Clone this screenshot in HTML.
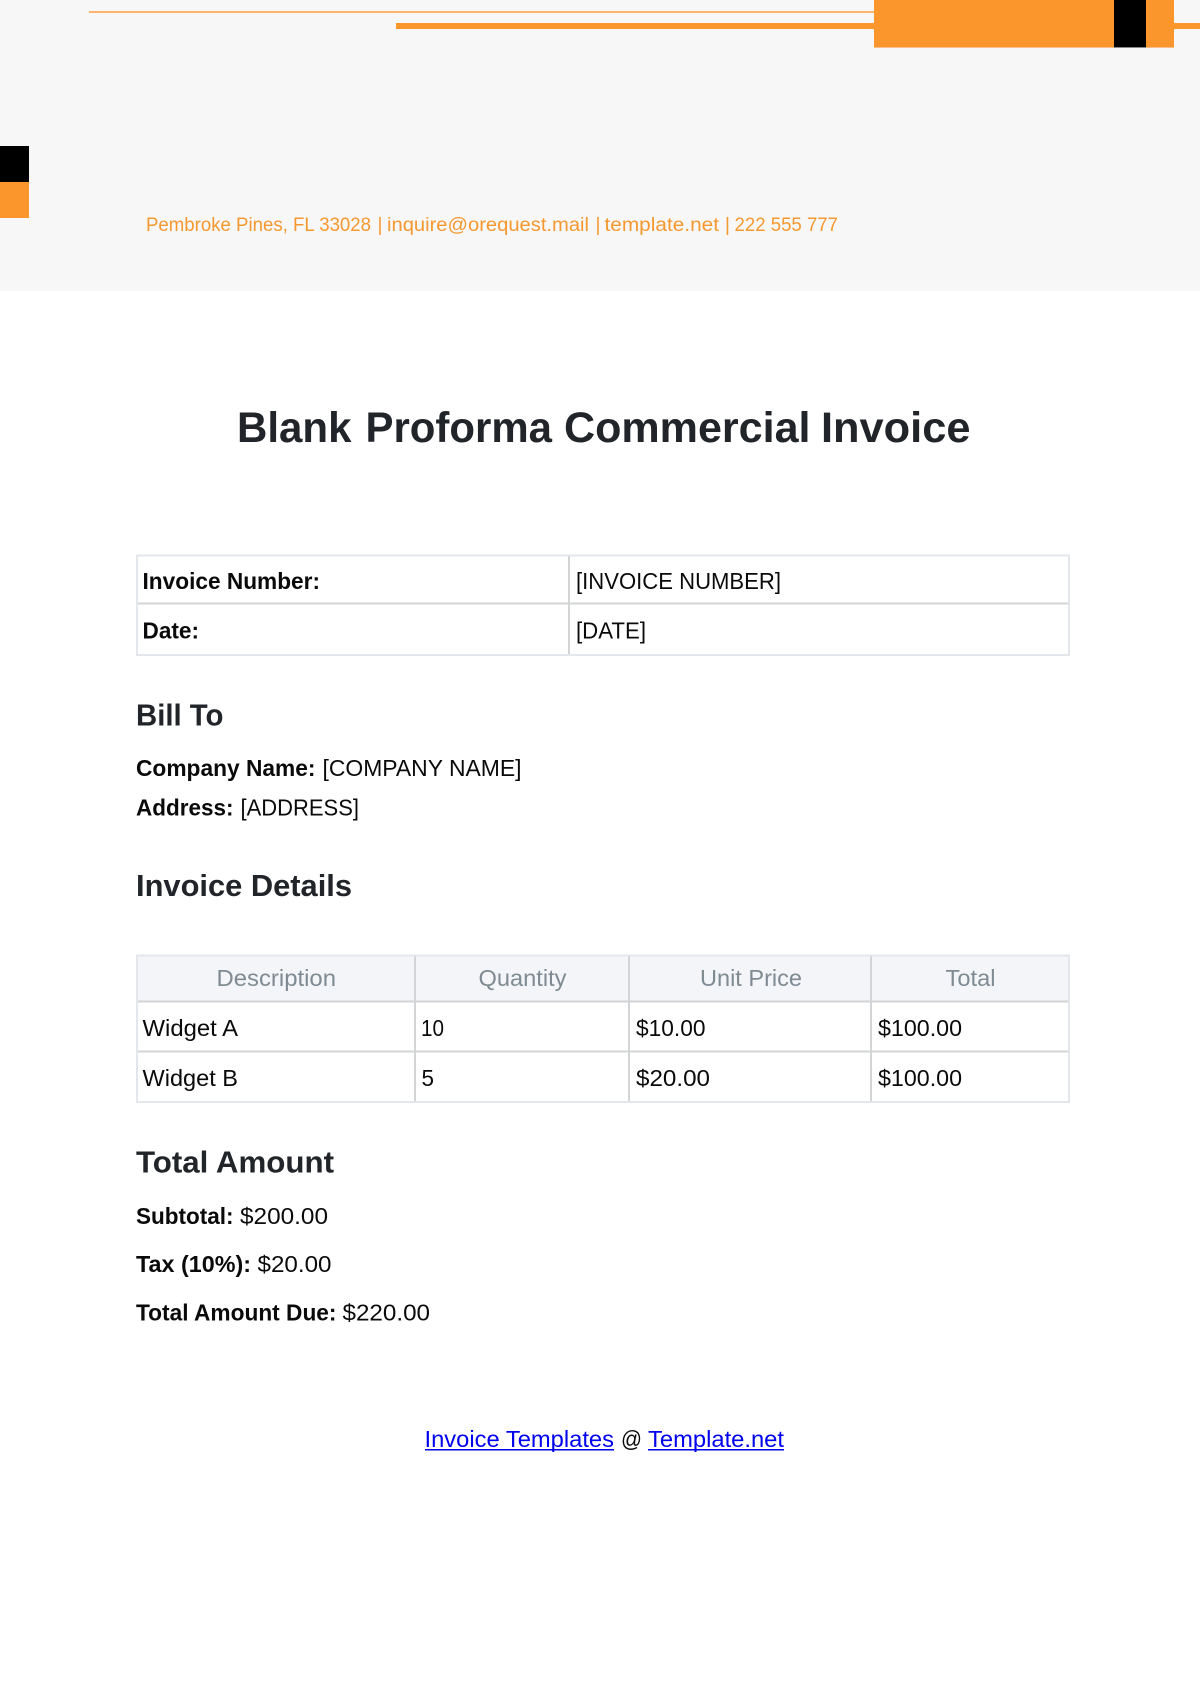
<!DOCTYPE html>
<html lang="en">
<head>
<meta charset="utf-8">
<title>Blank Proforma Commercial Invoice</title>
<style>
html,body{margin:0;padding:0;background:#fff}
svg{display:block}
text{font-family:"Liberation Sans",Arial,sans-serif;font-size:23px;fill:#0a0a0a}
.b{font-weight:700}
.h{font-weight:700;font-size:31px;fill:#212429}
.th{fill:#7f8a92}
.l{fill:#0000ee}
.c{font-size:19px;fill:#f5982f}
.t{font-size:43px}
</style>
</head>
<body>
<svg xmlns="http://www.w3.org/2000/svg" width="1200" height="1696" viewBox="0 0 1200 1696">
<rect width="1200" height="1696" fill="#fff"/>
<rect width="1200" height="291" fill="#f7f7f7"/>
<!-- header decoration -->
<rect x="89" y="11" width="785" height="2" fill="#fdb56d"/>
<rect x="396" y="23" width="478" height="6" fill="#fb962d"/>
<rect x="1174" y="23" width="26" height="6" fill="#fb962d"/>
<rect x="874" y="0" width="300" height="47" fill="#fb962d"/>
<rect x="874" y="47" width="300" height="1" fill="#fbc08a"/>
<rect x="1114" y="0" width="32" height="47" fill="#000"/>
<rect x="1114" y="47" width="32" height="1" fill="#8a8a8a"/>
<rect x="0" y="146" width="29" height="36" fill="#000"/>
<rect x="0" y="182" width="29" height="36" fill="#fb962d"/>
<text class="c" x="146" y="231" textLength="225" lengthAdjust="spacingAndGlyphs">Pembroke Pines, FL 33028</text>
<text class="c" x="377.5" y="231">|</text>
<text class="c" x="387" y="231" textLength="202" lengthAdjust="spacingAndGlyphs">inquire@orequest.mail</text>
<text class="c" x="595.5" y="231">|</text>
<text class="c" x="604.5" y="231" textLength="114.5" lengthAdjust="spacingAndGlyphs">template.net</text>
<text class="c" x="725" y="231">|</text>
<text class="c" x="734.5" y="231" textLength="103.5" lengthAdjust="spacingAndGlyphs">222 555 777</text>

<!-- title -->
<text class="h t" x="237" y="442" textLength="114.5" lengthAdjust="spacingAndGlyphs">Blank</text>
<text class="h t" x="365.5" y="442" textLength="186.5" lengthAdjust="spacingAndGlyphs">Proforma</text>
<text class="h t" x="564" y="442" textLength="246.5" lengthAdjust="spacingAndGlyphs">Commercial</text>
<text class="h t" x="821" y="442" textLength="149.5" lengthAdjust="spacingAndGlyphs">Invoice</text>

<!-- table 1 -->
<g fill="#d2d4d6">
<rect x="568" y="555" width="2" height="100"/>
<rect x="137" y="602.5" width="932" height="2"/>
</g>
<rect x="137" y="555.5" width="932" height="99.5" fill="none" stroke="#e3e6ea" stroke-width="2"/>
<text class="b" x="142.5" y="589" textLength="177.5" lengthAdjust="spacingAndGlyphs">Invoice Number:</text>
<text x="576" y="589" textLength="205" lengthAdjust="spacingAndGlyphs">[INVOICE NUMBER]</text>
<text class="b" x="142.5" y="638.5" textLength="56.5" lengthAdjust="spacingAndGlyphs">Date:</text>
<text x="576" y="638.5" textLength="70" lengthAdjust="spacingAndGlyphs">[DATE]</text>

<!-- bill to -->
<text class="h" x="136" y="725.5" textLength="87.5" lengthAdjust="spacingAndGlyphs">Bill To</text>
<text class="b" x="136" y="776" textLength="179.5" lengthAdjust="spacingAndGlyphs">Company Name:</text>
<text x="322.5" y="776" textLength="199" lengthAdjust="spacingAndGlyphs">[COMPANY NAME]</text>
<text class="b" x="136" y="815.5" textLength="97.5" lengthAdjust="spacingAndGlyphs">Address:</text>
<text x="240.5" y="815.5" textLength="118.5" lengthAdjust="spacingAndGlyphs">[ADDRESS]</text>

<!-- invoice details -->
<text class="h" x="136" y="896" textLength="216" lengthAdjust="spacingAndGlyphs">Invoice Details</text>

<!-- table 2 -->
<rect x="137" y="955.5" width="932" height="46" fill="#f3f5f9"/>
<g fill="#d2d4d6">
<rect x="414" y="955" width="2" height="147"/>
<rect x="628" y="955" width="2" height="147"/>
<rect x="870" y="955" width="2" height="147"/>
<rect x="137" y="1000.5" width="932" height="2"/>
<rect x="137" y="1050.5" width="932" height="2"/>
</g>
<rect x="137" y="955.5" width="932" height="146.5" fill="none" stroke="#e3e6ea" stroke-width="2"/>
<text class="th" x="216.5" y="986" textLength="119.5" lengthAdjust="spacingAndGlyphs">Description</text>
<text class="th" x="478.5" y="986" textLength="88" lengthAdjust="spacingAndGlyphs">Quantity</text>
<text class="th" x="700" y="986" textLength="102" lengthAdjust="spacingAndGlyphs">Unit Price</text>
<text class="th" x="945.5" y="986" textLength="50" lengthAdjust="spacingAndGlyphs">Total</text>

<text x="142.5" y="1036" textLength="95.5" lengthAdjust="spacingAndGlyphs">Widget A</text>
<text x="421" y="1036" textLength="23" lengthAdjust="spacingAndGlyphs">10</text>
<text x="636" y="1036" textLength="69.5" lengthAdjust="spacingAndGlyphs">$10.00</text>
<text x="878" y="1036" textLength="84" lengthAdjust="spacingAndGlyphs">$100.00</text>
<text x="142.5" y="1086" textLength="95.5" lengthAdjust="spacingAndGlyphs">Widget B</text>
<text x="421.5" y="1086" textLength="12.5" lengthAdjust="spacingAndGlyphs">5</text>
<text x="636" y="1086" textLength="74" lengthAdjust="spacingAndGlyphs">$20.00</text>
<text x="878" y="1086" textLength="84" lengthAdjust="spacingAndGlyphs">$100.00</text>

<!-- total amount -->
<text class="h" x="136" y="1172.5" textLength="198" lengthAdjust="spacingAndGlyphs">Total Amount</text>
<text class="b" x="136" y="1224" textLength="97.5" lengthAdjust="spacingAndGlyphs">Subtotal:</text>
<text x="240" y="1224" textLength="88" lengthAdjust="spacingAndGlyphs">$200.00</text>
<text class="b" x="136" y="1272" textLength="115" lengthAdjust="spacingAndGlyphs">Tax (10%):</text>
<text x="257.5" y="1272" textLength="74" lengthAdjust="spacingAndGlyphs">$20.00</text>
<text class="b" x="136" y="1320.5" textLength="200.5" lengthAdjust="spacingAndGlyphs">Total Amount Due:</text>
<text x="342.5" y="1320.5" textLength="87.5" lengthAdjust="spacingAndGlyphs">$220.00</text>

<!-- footer links -->
<a href="#"><text class="l" x="424.5" y="1447" textLength="189.5" lengthAdjust="spacingAndGlyphs">Invoice Templates</text></a>
<rect x="425" y="1449" width="189" height="1.5" fill="#0000ee"/>
<text x="621" y="1447" textLength="21" lengthAdjust="spacingAndGlyphs">@</text>
<a href="#"><text class="l" x="648" y="1447" textLength="136" lengthAdjust="spacingAndGlyphs">Template.net</text></a>
<rect x="648" y="1449" width="136" height="1.5" fill="#0000ee"/>
</svg>
</body>
</html>
